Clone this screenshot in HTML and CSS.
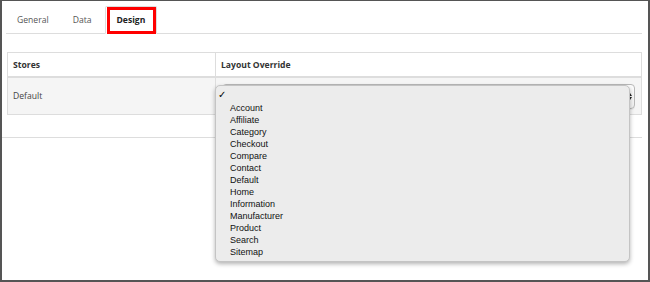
FILE: index.html
```html
<!DOCTYPE html>
<html>
<head>
<meta charset="utf-8">
<link rel="stylesheet" href="styles.css">
</head>
<body>
<div class="frame">
  <div class="panel">
    <ul class="tabs">
      <li class="tab">General</li>
      <li class="tab">Data</li>
      <li class="tab active">Design<span class="mark"></span></li>
    </ul>
    <table class="grid">
      <thead>
        <tr><th class="c1">Stores</th><th class="c2">Layout Override</th></tr>
      </thead>
      <tbody>
        <tr>
          <td class="c1">Default</td>
          <td class="c2 selcell">
            <div class="select"><span class="arrows"><span class="up"></span><span class="down"></span></span></div>
            <ul class="popup">
              <li class="opt checked"><span class="check">✓</span>&nbsp;</li>
              <li class="opt">Account</li>
              <li class="opt">Affiliate</li>
              <li class="opt">Category</li>
              <li class="opt">Checkout</li>
              <li class="opt">Compare</li>
              <li class="opt">Contact</li>
              <li class="opt">Default</li>
              <li class="opt">Home</li>
              <li class="opt">Information</li>
              <li class="opt">Manufacturer</li>
              <li class="opt">Product</li>
              <li class="opt">Search</li>
              <li class="opt">Sitemap</li>
            </ul>
          </td>
        </tr>
      </tbody>
    </table>
  </div>
  <div class="rule"></div>
</div>
</body>
</html>
```

FILE: styles.css
```css
html, body { margin: 0; padding: 0; background: #fff; }
.frame {
  width: 650px; height: 282px; box-sizing: border-box;
  border: 2px solid #555; border-top-width: 1px;
  font-family: "Open Sans", sans-serif; font-size: 8.6px; color: #444;
  overflow: hidden;
}
.panel { padding: 5px 6px 0 4px; }
.tabs {
  list-style: none; margin: 0; padding: 0;
  display: flex; height: 27px; border-bottom: 1px solid #ddd;
}
.tab {
  padding: 0 12px; line-height: 29px; color: #555;
  position: relative; box-sizing: border-box;
}
.tab:first-child { padding-left: 11px; }
.tab.active {
  font-weight: 700; color: #222; margin-left: 1px; padding: 0 11px;
  border: 1px solid #ddd; border-bottom: 1px solid #fff; border-radius: 2px 2px 0 0;
  height: 28px; line-height: 27px; background: #fff;
}
.mark {
  position: absolute; left: 1px; right: 0px; top: 0; bottom: -1px;
  border: 3px solid #f00;
}
.grid {
  margin: 18px 0 0 1px; width: 635px; border-collapse: collapse;
  border: 1px solid #ddd;
}
.grid th, .grid td { border: 1px solid #ddd; text-align: left; padding: 0 0 0 5px; }
.grid th { height: 23px; font-weight: 700; color: #333; background: #fff; border-bottom: 2px solid #ddd; }
.grid td { background: #f5f5f5; }
.grid .c1 { width: 202px; }
.grid td.selcell { position: relative; padding: 6px 6px 5px 6px; }
.select {
  height: 25px; box-sizing: border-box; border: 1px solid #b8b8b8; border-radius: 4px;
  background: linear-gradient(#fdfdfd, #f1f1f1); position: relative;
  box-shadow: 0 1px 0 rgba(0,0,0,0.05);
}
.arrows { position: absolute; right: 2px; top: 8px; display: flex; flex-direction: column; gap: 1px; }
.up { width: 0; height: 0; border-left: 2px solid transparent; border-right: 2px solid transparent; border-bottom: 3px solid #222; }
.down { width: 0; height: 0; border-left: 2px solid transparent; border-right: 2px solid transparent; border-top: 3px solid #222; }
.popup {
  position: absolute; left: -1px; top: 7px; width: 415px; box-sizing: border-box;
  margin: 0; padding: 4px 0 3px 14px; list-style: none;
  background: #ececec; border: 1px solid #c4c4c4; border-radius: 5px;
  box-shadow: 0 2px 4px rgba(0,0,0,0.3);
  font-family: "Liberation Sans", Arial, sans-serif; font-size: 9px; color: #111;
}
.opt { line-height: 12px; height: 12px; position: relative; }
.check { position: absolute; left: -12px; top: -1px; font-family: "DejaVu Sans", sans-serif; font-size: 10px; font-weight: 700; color: #000; }
.rule { margin: 22px 6px 0 0; border-top: 1px solid #ddd; }
```
